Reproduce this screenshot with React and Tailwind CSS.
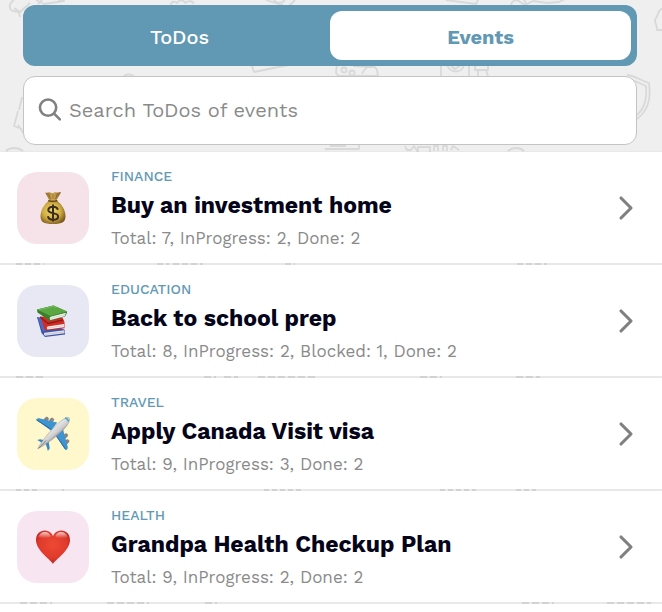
import React, { useState } from 'react';
import { ChevronRight } from 'lucide-react';

const MoneyBag = () => (
  <svg className="w-9 h-9" viewBox="0 0 36 36" aria-hidden="true">
    <defs>
      <radialGradient id="bag" cx="45%" cy="45%" r="60%">
        <stop offset="0" stopColor="#f0da68" />
        <stop offset="0.6" stopColor="#cfac42" />
        <stop offset="1" stopColor="#7d5a1c" />
      </radialGradient>
      <linearGradient id="neck" x1="0" x2="1">
        <stop offset="0" stopColor="#8f6a2a" />
        <stop offset="0.5" stopColor="#d0ac52" />
        <stop offset="1" stopColor="#7f5a22" />
      </linearGradient>
    </defs>
    <path d="M10.5 2.5c2 1 3-.6 4.5 0s2.500.8 4-.1 3 .8 6.800-.3c.5.600-2.800 5-4.300 8.400h-7.200c-1-3-4.400-7.400-3.800-8z" fill="url(#neck)" />
    <path d="M14.300 10.500h7.200c4.500 2.500 9 9.500 9 15.500 0 6-3 8-12.500 8S5.500 32 5.500 26c0-6 4.300-13 8.800-15.500z" fill="url(#bag)" />
    <path d="M13.500 4l2 5M18 4v5M22.500 4l-2 5" stroke="#80601f" strokeWidth="0.7" />
    <path d="M13.800 10.700c2.500.8 5.500.8 8 0" stroke="#6f4d18" strokeWidth="1.6" fill="none" strokeLinecap="round" />
    <path d="M18 14.500v17M22.800 19.700c-.5-2-2.200-3-4.800-3-2.800 0-4.700 1.300-4.700 3.300 0 4.600 9.800 1.600 9.800 6.400 0 2-2 3.300-5 3.300-2.900 0-4.800-1.200-5.200-3.400" stroke="#3a2d20" strokeWidth="2" fill="none" />
  </svg>
);

const Books = () => (
  <svg className="w-9 h-9" viewBox="0 0 36 36" aria-hidden="true">
    <path d="M2 14l8 4 20 9v4.500l-20 2.500-3.500-4z" fill="#3d53a8" />
    <path d="M9.500 29.800l20-2.500v3l-19.500 2.500c-1.200-.8-1.400-2.200-.5-3z" fill="#e4e4ec" />
    <path d="M10 31.400l19.500-2.500" stroke="#a9a9bd" strokeWidth="0.500" />
    <path d="M2 14l6 1 5 11-5 3z" fill="#5468b8" />
    <path d="M5.500 13.500l22 1 2 4.500v6.300L12 27.500c-2-.5-3-1.500-3-3z" fill="#cf2d25" />
    <path d="M12.500 23.500l16.500-2.500v3.200l-16.500 2.300c-1-.8-1-2.200 0-3z" fill="#f1eded" />
    <path d="M12.500 25l16.500-2.400" stroke="#bdb5b5" strokeWidth="0.500" />
    <path d="M5 14l8 6.500 15-3.500" stroke="#8f1b18" strokeWidth="1.400" fill="none" />
    <path d="M2 6.500L18.500 2.500 32 8.500v1.300L30 13.500 15 18 2.500 9.500z" fill="#38802c" />
    <path d="M15.500 13.700L31 9.700l-1.500 3.600L15.500 17c-1-.8-1-2.500 0-3.300z" fill="#f3f3ef" />
    <path d="M15.500 15.400l14.500-3.900" stroke="#b8b8b4" strokeWidth="0.500" />
    <path d="M2 6.500L18.500 2.500 32 8.500l-16.500 4.500z" fill="#5aa743" />
    <path d="M4 6.700L18.500 3.300l3 1.300" stroke="#84c86a" strokeWidth="0.700" fill="none" />
  </svg>
);

const Airplane = () => (
  <svg className="w-9 h-9" viewBox="1 1 39 39" aria-hidden="true">
    <defs>
      <linearGradient id="body" x1="0.300" y1="0.300" x2="0.650" y2="0.700">
        <stop offset="0" stopColor="#fbfbfb" />
        <stop offset="0.600" stopColor="#cfcfd2" />
        <stop offset="1" stopColor="#6f6f74" />
      </linearGradient>
    </defs>
    <g fill="#8d8583" stroke="#625e5d" strokeWidth="0.400">
      <rect x="11" y="3" width="5" height="3.600" rx="1.600" transform="rotate(-42 13 5)" />
      <rect x="16.500" y="3.700" width="5" height="3.600" rx="1.600" transform="rotate(-42 19 5.500)" />
      <rect x="32" y="21" width="5" height="3.600" rx="1.600" transform="rotate(-48 34 23)" />
      <rect x="33" y="27.500" width="5" height="3.600" rx="1.600" transform="rotate(-48 35 29)" />
    </g>
    <path d="M2.500 5.200c0-1.500 2-2 4-1.600L25 8l-6.500 9z" fill="#3d94d1" />
    <path d="M31 14l5.500 20.500c.3 2-1.500 4-2.500 3.200L22 20z" fill="#3d94d1" />
    <path d="M3.500 27l3-.8 8 2-3.500 3.500zM12 29l3.500-1.500 1.500 8.500-2 3z" fill="#3488c5" />
    <path d="M2.500 5.200L18 15M23 21l11 16" stroke="#236696" strokeWidth="1" />
    <path d="M4 36.500c2.500-6 12-18 22-27.500C31 4.500 36.500 1.500 38 3s-.8 7-5 11.500C24 24 12 32.500 4 36.500z" fill="url(#body)" stroke="#858589" strokeWidth="0.500" />
    <path d="M33.500 3.200c2 .5 3.500 2 3.800 4" stroke="#4aa4c4" strokeWidth="1.700" fill="none" />
    <path d="M13 27.500L5 36" stroke="#777" strokeWidth="1" />
  </svg>
);

const Heart = () => (
  <svg className="w-9 h-9" viewBox="0 0 36 36" aria-hidden="true">
    <defs>
      <radialGradient id="heart" cx="50%" cy="42%" r="62%">
        <stop offset="0" stopColor="#ed4a35" />
        <stop offset="0.650" stopColor="#e03a2b" />
        <stop offset="1" stopColor="#b02420" />
      </radialGradient>
      <linearGradient id="shine" x1="0" x2="0" y1="0" y2="1">
        <stop offset="0" stopColor="#fff" stopOpacity="0.750" />
        <stop offset="1" stopColor="#fff" stopOpacity="0" />
      </linearGradient>
    </defs>
    <path d="M18 35C15.500 30.500 1 21.500 1 11 1 5 5 1.500 9.800 1.500c4 0 6.800 2.200 8.200 5.500 1.400-3.300 4.200-5.500 8.200-5.500C31 1.500 35 5 35 11c0 10.500-14.500 19.500-17 24z" fill="url(#heart)" />
    <path d="M3.500 8C4.500 4.500 7 3 9.800 3c3.200 0 5.200 2 6 4.500-3 1.800-8.500 2.500-12.300.5zM20.200 7.500C21 5 23 3 26.200 3c2.800 0 5.300 1.500 6.300 5-3.800 2-9.300 1.300-12.300-.5z" fill="url(#shine)" />
  </svg>
);

const SearchIcon = () => (
  <svg className="w-[23px] h-[23px] shrink-0" viewBox="0 0 24 24" fill="none" stroke="#808080" strokeWidth="2.700" strokeLinecap="round" aria-hidden="true">
    <circle cx="10.500" cy="10" r="8.500" />
    <path d="M16.800 16.300l6 6" />
  </svg>
);

// Faint line drawings behind the header, also visible between the rows
const Doodles = () => (
  <svg className="absolute top-0 left-0 w-[662px] h-[612px] pointer-events-none" viewBox="0 0 662 612" fill="none" stroke="#d9d9d9" strokeWidth="1.800" strokeLinejoin="round" aria-hidden="true">
    <path d="M14 0c-5 3-6 9-1 11l6 1 1 5M14 8l6 4 10-9M36 0l8 4 20-3-6-1M38 4l4-4" />
    <path d="M171 5c0-4 4-4 6-2 3-4 7-3 8 0 4-3 8-2 9 1" />
    <path d="M266 0l22 7 7-7M274 0c2 4 8 4 11 0" />
    <path d="M446 0l30 4 2-4M511 5c1-5 6-6 9-3l5 3 8-4 14 2 12-1 6-3M524 0l3 5" />
    <path d="M252 66l2 6 34-7M124 76c2-2 7-2 10 0" />
    <path d="M22 97l-3 13M18 111l-4 15 8 3M18 125l6 9M6 151c4-4 12-4 17 0" />
    <path d="M337 66c-2 7-1 9 3 10h38l-1-6c-3-6-12-4-15 4M353 66l20 1" />
    <circle cx="344" cy="70" r="2.500" />
    <circle cx="352" cy="73" r="2.500" />
    <path d="M441 76V64M469 76V64M447 64c2 10 16 10 17 0M451 66l4 3 6-4M475 64v6h13v-6M478 70v6M486 70l2 6" />
    <path d="M627 75c9 1 15 6 22 8 2 14-1 28-12 36M630 80c7 1 11 4 16 6 1 11-1 22-9 29" />
    <path d="M662 9c-5 1-3 6-6 9s1 5 1 12h5" />
    <path d="M325 149h34v-5M330 146h16" />
    <path d="M405 146l2 4h4l3-4 4 6v-5h12v5M434 151v-5h4v5M443 151v-5h4v5M451 150l2-4 6 4M508 151c4-4 12-4 16 0" />
    <path d="M16 264h28M157 264h12m4 0h30M285 264h10M517 264h30" strokeDasharray="6 3" />
    <path d="M16 377h28M204 377h12m8 0h14m20 0h58M420 377h22M516 377h24" strokeDasharray="7 3" />
    <path d="M16 490h22M62 490h2M264 490h40M440 490h36m40 0h20" strokeDasharray="5 3" />
    <path d="M20 603h32M107 603h42M205 603h12M522 603h32m53 0h44" strokeDasharray="7 3" />
  </svg>
);

const EVENTS = [
  { category: 'FINANCE', title: 'Buy an investment home', summary: 'Total: 7, InProgress: 2, Done: 2', icon: MoneyBag, tile: 'bg-[#f6e3e9]' },
  { category: 'EDUCATION', title: 'Back to school prep', summary: 'Total: 8, InProgress: 2, Blocked: 1, Done: 2', icon: Books, tile: 'bg-[#e8e8f5]' },
  { category: 'TRAVEL', title: 'Apply Canada Visit visa', summary: 'Total: 9, InProgress: 3, Done: 2', icon: Airplane, tile: 'bg-[#fff8cc]' },
  { category: 'HEALTH', title: 'Grandpa Health Checkup Plan', summary: 'Total: 9, InProgress: 2, Done: 2', icon: Heart, tile: 'bg-[#f7e6f2]' },
];

const TABS = ['ToDos', 'Events'];

const EventRow = ({ event }) => {
  const Icon = event.icon;
  return (
    <li>
      <button type="button" className="w-full h-[111px] flex items-center pl-[17px] pr-4 bg-white text-left shadow-[0_0_2px_rgba(0,0,0,0.08)]">
        <span className={`w-[72px] h-[72px] rounded-[20px] shrink-0 flex items-center justify-center ${event.tile}`}>
          <Icon />
        </span>
        <span className="ml-[22px] pt-[2px] flex-1 min-w-0 flex flex-col">
          <span className="text-[14px] leading-5 font-medium text-[#6299b4]">{event.category}</span>
          <span className="mt-[2px] text-[23px] leading-9 font-bold text-[#05051a]">{event.title}</span>
          <span className="text-[17px] leading-7 text-[#8a8a8a]">{event.summary}</span>
        </span>
        <ChevronRight className="w-10 h-10 shrink-0 text-[#808080]" strokeWidth={1.9} />
      </button>
    </li>
  );
};

const App = () => {
  const [activeTab, setActiveTab] = useState('Events');

  return (
    <div className="relative min-h-screen overflow-hidden flex flex-col bg-[#efefef] font-['Work_Sans',Inter,sans-serif]">
      <Doodles />

      <header className="relative pl-[23px] pr-[25px] pt-[5px] pb-[7px] flex flex-col gap-[10px]">
        <div role="tablist" className="h-[61px] p-[6px] grid grid-cols-2 rounded-xl bg-[#6198b3]">
          {TABS.map((tab) => (
            <button
              key={tab}
              type="button"
              role="tab"
              aria-selected={activeTab === tab}
              onClick={() => setActiveTab(tab)}
              className={`pt-[2px] rounded-xl text-[20px] ${activeTab === tab ? 'bg-white font-bold text-[#6198b3]' : 'font-medium text-white'}`}
            >
              {tab}
            </button>
          ))}
        </div>

        <label className="h-[69px] px-[14px] pb-[2px] flex items-center gap-2 rounded-xl border border-[#c4c4c4] bg-white">
          <SearchIcon />
          <input
            type="search"
            aria-label="Search ToDos of events"
            placeholder="Search ToDos of events"
            className="flex-1 min-w-0 bg-transparent outline-none text-[20px] text-[#333] placeholder:text-[#8a8a8a]"
          />
        </label>
      </header>

      <ul className="relative flex flex-col gap-[2px]">
        {EVENTS.map((event) => (
          <EventRow key={event.title} event={event} />
        ))}
      </ul>

      <div className="relative mt-[2px] flex-1 bg-white shadow-[0_0_2px_rgba(0,0,0,0.08)]" />
    </div>
  );
};

export default App;
